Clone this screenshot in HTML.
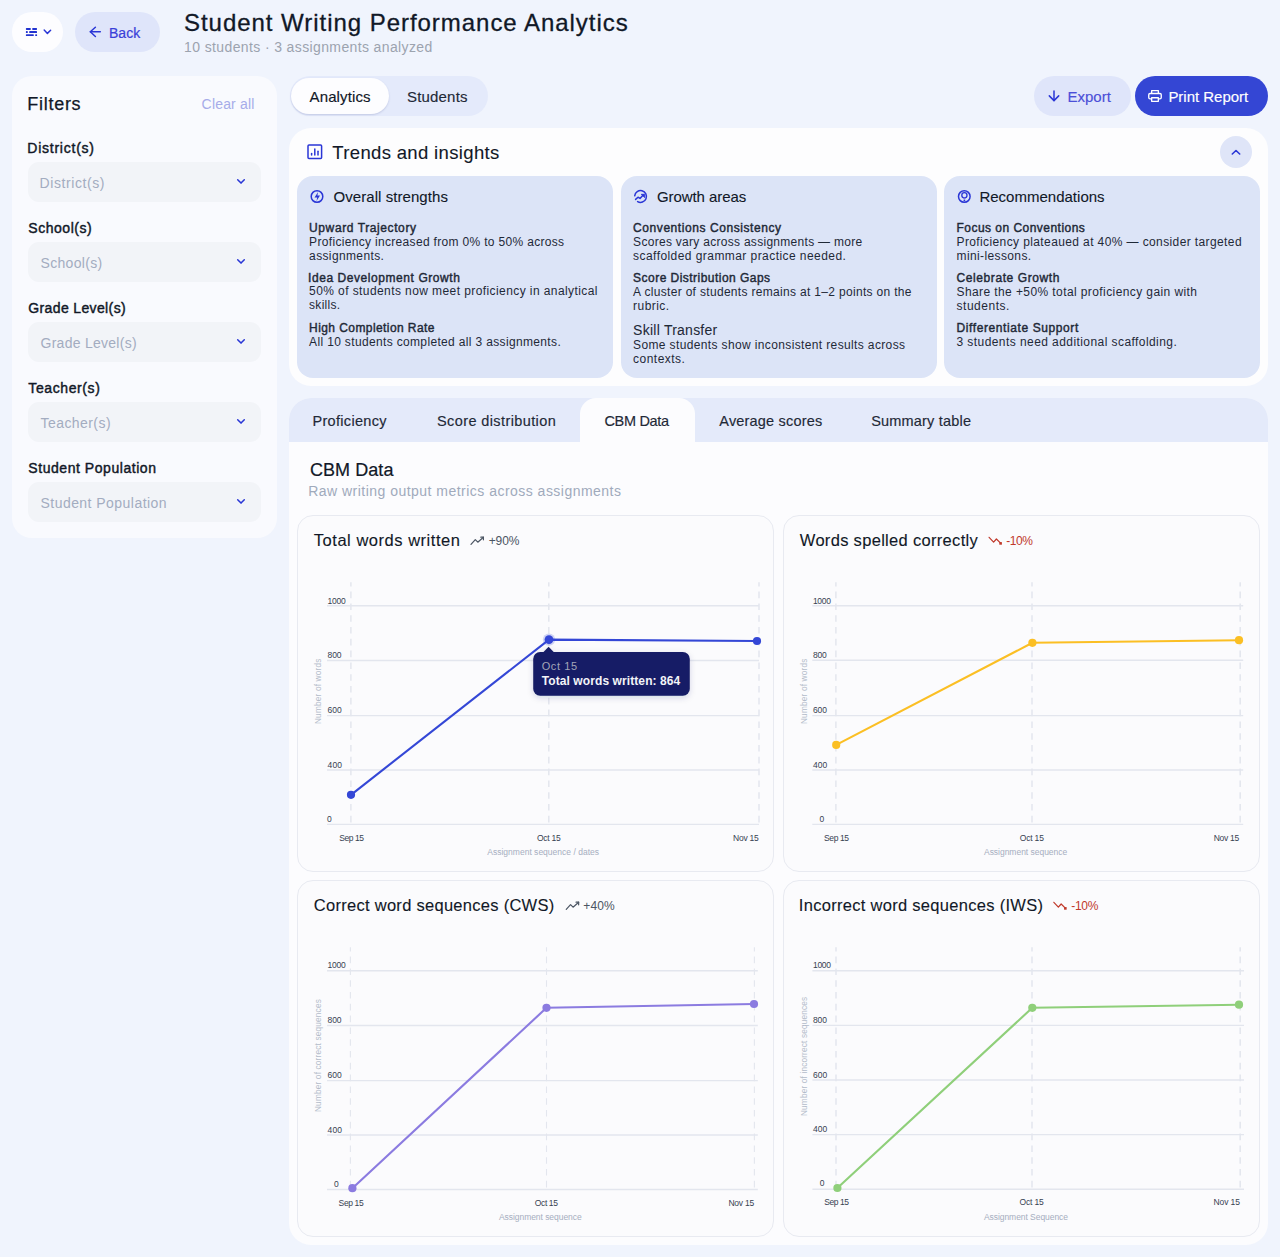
<!DOCTYPE html><html><head><meta charset="utf-8"><title>Student Writing Performance Analytics</title><style>
html,body{margin:0;padding:0;}
body{width:1280px;height:1257px;overflow:hidden;background:#f0f4fd;position:relative;font-family:"Liberation Sans",sans-serif;}
.t{position:absolute;white-space:nowrap;line-height:1;}
.b{position:absolute;box-sizing:border-box;}
svg{position:absolute;left:0;top:0;overflow:visible;}
</style></head><body>
<div class="b" style="left:12px;top:12px;width:51px;height:40px;background:#fdfdff;border-radius:20px;"></div>
<svg width="80" height="60"><g fill="#2233d0">
<rect x="25.9" y="28" width="4.9" height="1.9" rx="0.6"/><rect x="32.2" y="28" width="4.8" height="1.9" rx="0.6"/>
<rect x="25.9" y="31.1" width="1.9" height="1.9" rx="0.6"/><rect x="29.2" y="31.1" width="7.8" height="1.9" rx="0.6"/>
<rect x="25.9" y="34.2" width="7.9" height="1.9" rx="0.6"/><rect x="35.2" y="34.2" width="1.9" height="1.9" rx="0.6"/>
</g><polyline points="44.2,30.1 47.4,33.4 50.6,30.2" fill="none" stroke="#2a36d6" stroke-width="1.5" stroke-linecap="round" stroke-linejoin="round"/></svg>
<div class="b" style="left:75px;top:12px;width:85px;height:40px;background:#dfe5fa;border-radius:20px;"></div>
<svg width="160" height="60"><g fill="none" stroke="#2a36d6" stroke-width="1.5" stroke-linecap="round" stroke-linejoin="round">
<polyline points="95.4,27.3 90.3,31.8 95.4,36.5"/><line x1="90.4" y1="31.8" x2="100.3" y2="31.8"/></g></svg>
<div class="t" style="left:109.00px;top:25.65px;font-size:14px;color:#3a40d8;letter-spacing:0.025px;-webkit-text-stroke:0.2px #3a40d8;">Back</div>
<div class="t" style="left:184.00px;top:11.48px;font-size:24px;color:#111827;letter-spacing:0.961px;-webkit-text-stroke:0.3px #111827;">Student Writing Performance Analytics</div>
<div class="t" style="left:184.10px;top:39.95px;font-size:14px;color:#9ca3af;letter-spacing:0.376px;">10 students · 3 assignments analyzed</div>
<div class="b" style="left:12px;top:76px;width:265px;height:462px;background:#f9fafe;border-radius:20px;"></div>
<div class="t" style="left:27.30px;top:95.06px;font-size:18px;color:#111827;letter-spacing:0.717px;-webkit-text-stroke:0.25px #111827;">Filters</div>
<div class="t" style="left:201.60px;top:96.55px;font-size:14px;color:#a6ace9;letter-spacing:0.182px;">Clear all</div>
<div class="t" style="left:27.30px;top:140.85px;font-size:14px;color:#111827;letter-spacing:0.757px;-webkit-text-stroke:0.42px #111827;">District(s)</div>
<div class="b" style="left:28px;top:162px;width:233px;height:40px;background:#f2f4f8;border-radius:11px;"></div>
<div class="t" style="left:39.50px;top:175.65px;font-size:14px;color:#a3acc0;letter-spacing:0.587px;">District(s)</div>
<svg width="280" height="600"><polyline points="237.7,179.7 241,183.1 244.3,179.7" fill="none" stroke="#2a36d6" stroke-width="1.5" stroke-linecap="round" stroke-linejoin="round"/></svg>
<div class="t" style="left:28.30px;top:220.85px;font-size:14px;color:#111827;letter-spacing:0.541px;-webkit-text-stroke:0.42px #111827;">School(s)</div>
<div class="b" style="left:28px;top:242px;width:233px;height:40px;background:#f2f4f8;border-radius:11px;"></div>
<div class="t" style="left:40.50px;top:255.65px;font-size:14px;color:#a3acc0;letter-spacing:0.316px;">School(s)</div>
<svg width="280" height="600"><polyline points="237.7,259.7 241,263.1 244.3,259.7" fill="none" stroke="#2a36d6" stroke-width="1.5" stroke-linecap="round" stroke-linejoin="round"/></svg>
<div class="t" style="left:28.30px;top:300.85px;font-size:14px;color:#111827;letter-spacing:0.367px;-webkit-text-stroke:0.42px #111827;">Grade Level(s)</div>
<div class="b" style="left:28px;top:322px;width:233px;height:40px;background:#f2f4f8;border-radius:11px;"></div>
<div class="t" style="left:40.50px;top:335.65px;font-size:14px;color:#a3acc0;letter-spacing:0.267px;">Grade Level(s)</div>
<svg width="280" height="600"><polyline points="237.7,339.7 241,343.1 244.3,339.7" fill="none" stroke="#2a36d6" stroke-width="1.5" stroke-linecap="round" stroke-linejoin="round"/></svg>
<div class="t" style="left:28.30px;top:380.85px;font-size:14px;color:#111827;letter-spacing:0.603px;-webkit-text-stroke:0.42px #111827;">Teacher(s)</div>
<div class="b" style="left:28px;top:402px;width:233px;height:40px;background:#f2f4f8;border-radius:11px;"></div>
<div class="t" style="left:40.50px;top:415.65px;font-size:14px;color:#a3acc0;letter-spacing:0.437px;">Teacher(s)</div>
<svg width="280" height="600"><polyline points="237.7,419.7 241,423.1 244.3,419.7" fill="none" stroke="#2a36d6" stroke-width="1.5" stroke-linecap="round" stroke-linejoin="round"/></svg>
<div class="t" style="left:28.30px;top:460.85px;font-size:14px;color:#111827;letter-spacing:0.551px;-webkit-text-stroke:0.42px #111827;">Student Population</div>
<div class="b" style="left:28px;top:482px;width:233px;height:40px;background:#f2f4f8;border-radius:11px;"></div>
<div class="t" style="left:40.50px;top:495.65px;font-size:14px;color:#a3acc0;letter-spacing:0.457px;">Student Population</div>
<svg width="280" height="600"><polyline points="237.7,499.7 241,503.1 244.3,499.7" fill="none" stroke="#2a36d6" stroke-width="1.5" stroke-linecap="round" stroke-linejoin="round"/></svg>
<div class="b" style="left:290px;top:76px;width:198px;height:40px;background:#e4eafb;border-radius:20px;"></div>
<div class="b" style="left:291px;top:78px;width:98px;height:36px;background:#fdfdff;border-radius:18px;box-shadow:0 1px 2px rgba(60,70,140,0.20);"></div>
<div class="t" style="left:309.60px;top:89.10px;font-size:15px;color:#111827;letter-spacing:0.110px;-webkit-text-stroke:0.15px #111827;">Analytics</div>
<div class="t" style="left:407.00px;top:89.10px;font-size:15px;color:#1f2937;letter-spacing:0.184px;-webkit-text-stroke:0.15px #1f2937;">Students</div>
<div class="b" style="left:1034px;top:76px;width:97px;height:40px;background:#dfe5fa;border-radius:20px;"></div>
<svg width="1280" height="130"><g fill="none" stroke="#2a36d6" stroke-width="1.5" stroke-linecap="round" stroke-linejoin="round">
<line x1="1054" y1="90.9" x2="1054" y2="100.6"/><polyline points="1049.3,95.9 1054,100.6 1058.7,95.9"/></g></svg>
<div class="t" style="left:1067.40px;top:89.20px;font-size:15px;color:#4b4fd8;letter-spacing:0.023px;-webkit-text-stroke:0.15px #4b4fd8;">Export</div>
<div class="b" style="left:1135px;top:76px;width:133px;height:40px;background:#3446d4;border-radius:20px;"></div>
<svg width="1280" height="130"><g fill="none" stroke="#ffffff" stroke-width="1.35" stroke-linejoin="round">
<path d="M1151.65 93.5 V90.65 H1158.35 V93.5"/><rect x="1148.75" y="93.5" width="12.5" height="5.4" rx="1.3"/><rect x="1151.65" y="97.75" width="6.7" height="3.6" fill="#3446d4"/></g></svg>
<div class="t" style="left:1168.40px;top:89.20px;font-size:15px;color:#ffffff;letter-spacing:-0.024px;-webkit-text-stroke:0.15px #ffffff;">Print Report</div>
<div class="b" style="left:289px;top:128px;width:979px;height:258px;background:#fdfdfe;border-radius:22px;"></div>
<svg width="1280" height="400"><g fill="none" stroke="#2a36d6" stroke-width="1.5" stroke-linecap="round">
<rect x="308" y="145" width="13.6" height="13.6" rx="1"/><line x1="311.6" y1="155" x2="311.6" y2="153.6"/><line x1="314.8" y1="155" x2="314.8" y2="149"/><line x1="318" y1="155" x2="318" y2="151.2"/></g></svg>
<div class="t" style="left:332.30px;top:143.74px;font-size:18.5px;color:#111827;letter-spacing:0.344px;-webkit-text-stroke:0.1px #111827;">Trends and insights</div>
<div class="b" style="left:1220px;top:136px;width:32px;height:32px;background:#dfe5f8;border-radius:16px;"></div>
<svg width="1280" height="400"><polyline points="1232.3,154 1236,150.5 1239.7,154" fill="none" stroke="#2a36d6" stroke-width="1.6" stroke-linecap="round" stroke-linejoin="round"/></svg>
<div class="b" style="left:297px;top:176px;width:315.8px;height:202px;background:#dce4f7;border-radius:16px;"></div>
<svg width="1280" height="400"><circle cx="317" cy="196.5" r="5.8" fill="none" stroke="#2a36d6" stroke-width="1.5"/><path d="M318.1 191.9 L314.5 197.4 H317.2 L316.5 201 L320 195.5 H317.4 Z" fill="#2a36d6"/></svg>
<div class="t" style="left:333.50px;top:189.20px;font-size:15px;color:#111827;letter-spacing:0.064px;-webkit-text-stroke:0.1px #111827;">Overall strengths</div>
<div class="t" style="left:309.10px;top:221.74px;font-size:12px;color:#1f2937;letter-spacing:0.595px;-webkit-text-stroke:0.42px #1f2937;">Upward Trajectory</div>
<div class="t" style="left:309.10px;top:235.54px;font-size:12px;color:#1f2937;letter-spacing:0.323px;">Proficiency increased from 0% to 50% across</div>
<div class="t" style="left:309.10px;top:249.54px;font-size:12px;color:#1f2937;letter-spacing:0.367px;">assignments.</div>
<div class="t" style="left:308.10px;top:271.54px;font-size:12px;color:#1f2937;letter-spacing:0.562px;-webkit-text-stroke:0.42px #1f2937;">Idea Development Growth</div>
<div class="t" style="left:309.10px;top:285.34px;font-size:12px;color:#1f2937;letter-spacing:0.413px;">50% of students now meet proficiency in analytical</div>
<div class="t" style="left:309.10px;top:299.44px;font-size:12px;color:#1f2937;letter-spacing:0.267px;">skills.</div>
<div class="t" style="left:309.10px;top:321.64px;font-size:12px;color:#1f2937;letter-spacing:0.420px;-webkit-text-stroke:0.42px #1f2937;">High Completion Rate</div>
<div class="t" style="left:309.10px;top:335.54px;font-size:12px;color:#1f2937;letter-spacing:0.345px;">All 10 students completed all 3 assignments.</div>
<div class="b" style="left:621px;top:176px;width:315.8px;height:202px;background:#dce4f7;border-radius:16px;"></div>
<svg width="1280" height="400"><path d="M634.7 195.8 A5.9 5.9 0 1 1 637.6 201.6" fill="none" stroke="#2a36d6" stroke-width="1.5" stroke-linecap="round"/><polyline points="635.6,199.4 638,197.2 640,198.4 643.2,195" fill="none" stroke="#2a36d6" stroke-width="1.5" stroke-linecap="round" stroke-linejoin="round"/><path d="M641.2 194.3 L644.6 194.3 L644.6 197.6 Z" fill="#2a36d6" stroke="#2a36d6" stroke-width="0.8" stroke-linejoin="round"/></svg>
<div class="t" style="left:657.00px;top:189.20px;font-size:15px;color:#111827;letter-spacing:-0.076px;-webkit-text-stroke:0.1px #111827;">Growth areas</div>
<div class="t" style="left:633.10px;top:221.74px;font-size:12px;color:#1f2937;letter-spacing:0.568px;-webkit-text-stroke:0.42px #1f2937;">Conventions Consistency</div>
<div class="t" style="left:633.10px;top:235.54px;font-size:12px;color:#1f2937;letter-spacing:0.287px;">Scores vary across assignments — more</div>
<div class="t" style="left:633.10px;top:249.54px;font-size:12px;color:#1f2937;letter-spacing:0.437px;">scaffolded grammar practice needed.</div>
<div class="t" style="left:633.10px;top:271.64px;font-size:12px;color:#1f2937;letter-spacing:0.467px;-webkit-text-stroke:0.42px #1f2937;">Score Distribution Gaps</div>
<div class="t" style="left:633.10px;top:285.54px;font-size:12px;color:#1f2937;letter-spacing:0.318px;">A cluster of students remains at 1–2 points on the</div>
<div class="t" style="left:633.10px;top:299.54px;font-size:12px;color:#1f2937;letter-spacing:0.432px;">rubric.</div>
<div class="t" style="left:633.10px;top:323.35px;font-size:14px;color:#1f2937;letter-spacing:0.246px;-webkit-text-stroke:0.05px #1f2937;">Skill Transfer</div>
<div class="t" style="left:633.10px;top:338.54px;font-size:12px;color:#1f2937;letter-spacing:0.366px;">Some students show inconsistent results across</div>
<div class="t" style="left:633.10px;top:352.54px;font-size:12px;color:#1f2937;letter-spacing:0.476px;">contexts.</div>
<div class="b" style="left:944px;top:176px;width:316px;height:202px;background:#dce4f7;border-radius:16px;"></div>
<svg width="1280" height="400"><circle cx="964.3" cy="196.5" r="5.8" fill="none" stroke="#2a36d6" stroke-width="1.5"/><circle cx="964.4" cy="195.2" r="2.6" fill="none" stroke="#2a36d6" stroke-width="1.3"/><rect x="963.3" y="197.6" width="2.2" height="1.6" fill="#7b6fe0"/><circle cx="964.4" cy="200.4" r="0.9" fill="#2a36d6"/></svg>
<div class="t" style="left:979.40px;top:189.20px;font-size:15px;color:#111827;letter-spacing:0.010px;-webkit-text-stroke:0.1px #111827;">Recommendations</div>
<div class="t" style="left:956.50px;top:221.74px;font-size:12px;color:#1f2937;letter-spacing:0.468px;-webkit-text-stroke:0.42px #1f2937;">Focus on Conventions</div>
<div class="t" style="left:956.50px;top:235.54px;font-size:12px;color:#1f2937;letter-spacing:0.388px;">Proficiency plateaued at 40% — consider targeted</div>
<div class="t" style="left:956.50px;top:249.54px;font-size:12px;color:#1f2937;letter-spacing:0.385px;">mini-lessons.</div>
<div class="t" style="left:956.50px;top:271.64px;font-size:12px;color:#1f2937;letter-spacing:0.589px;-webkit-text-stroke:0.42px #1f2937;">Celebrate Growth</div>
<div class="t" style="left:956.50px;top:285.54px;font-size:12px;color:#1f2937;letter-spacing:0.407px;">Share the +50% total proficiency gain with</div>
<div class="t" style="left:956.50px;top:299.54px;font-size:12px;color:#1f2937;letter-spacing:0.530px;">students.</div>
<div class="t" style="left:956.50px;top:321.64px;font-size:12px;color:#1f2937;letter-spacing:0.594px;-webkit-text-stroke:0.42px #1f2937;">Differentiate Support</div>
<div class="t" style="left:956.50px;top:335.54px;font-size:12px;color:#1f2937;letter-spacing:0.429px;">3 students need additional scaffolding.</div>
<div class="b" style="left:289px;top:398px;width:979px;height:847px;background:#fcfcfe;border-radius:22px;"></div>
<div class="b" style="left:289px;top:398px;width:979px;height:44px;background:#e4eafa;border-radius:22px 22px 0 0;"></div>
<div class="b" style="left:580px;top:398px;width:115px;height:44px;background:#fcfcfe;border-radius:16px 16px 0 0;"></div>
<div class="t" style="left:312.40px;top:413.73px;font-size:14.5px;color:#1f2937;letter-spacing:0.324px;-webkit-text-stroke:0.15px #1f2937;">Proficiency</div>
<div class="t" style="left:437.00px;top:413.73px;font-size:14.5px;color:#1f2937;letter-spacing:0.396px;-webkit-text-stroke:0.15px #1f2937;">Score distribution</div>
<div class="t" style="left:604.40px;top:413.73px;font-size:14.5px;color:#1f2937;letter-spacing:-0.316px;-webkit-text-stroke:0.15px #1f2937;">CBM Data</div>
<div class="t" style="left:719.30px;top:413.73px;font-size:14.5px;color:#1f2937;letter-spacing:0.190px;-webkit-text-stroke:0.15px #1f2937;">Average scores</div>
<div class="t" style="left:871.20px;top:413.73px;font-size:14.5px;color:#1f2937;letter-spacing:0.188px;-webkit-text-stroke:0.15px #1f2937;">Summary table</div>
<div class="t" style="left:310.00px;top:460.86px;font-size:18px;color:#111827;letter-spacing:0.056px;-webkit-text-stroke:0.2px #111827;">CBM Data</div>
<div class="t" style="left:308.20px;top:483.65px;font-size:14px;color:#a0aabc;letter-spacing:0.478px;">Raw writing output metrics across assignments</div>
<div class="b" style="left:297px;top:515px;width:477px;height:357px;background:#fbfbfd;border-radius:16px;border:1px solid #e8eaf1;"></div>
<div class="t" style="left:313.80px;top:532.23px;font-size:16.5px;color:#111827;letter-spacing:0.525px;-webkit-text-stroke:0.1px #111827;">Total words written</div>
<svg width="1280" height="1257"><g fill="none" stroke="#4b5563" stroke-width="1.2" stroke-linecap="round" stroke-linejoin="round"><polyline points="471,544.4000000000001 475.3,539.7 477.8,542.2 483.4,537.2"/><polyline points="480.8,537.2 483.4,537.2 483.4,539.8000000000001"/></g><line x1="327" y1="605.8" x2="759" y2="605.8" stroke="#e3e6ee" stroke-width="1.4"/><line x1="327" y1="660.5" x2="759" y2="660.5" stroke="#e3e6ee" stroke-width="1.4"/><line x1="327" y1="715.6" x2="759" y2="715.6" stroke="#e3e6ee" stroke-width="1.4"/><line x1="327" y1="770" x2="759" y2="770" stroke="#e3e6ee" stroke-width="1.4"/><line x1="327" y1="824.4" x2="759" y2="824.4" stroke="#e3e6ee" stroke-width="1.4"/><line x1="350.9" y1="582.2" x2="350.9" y2="824.4" stroke="#e3e6ee" stroke-width="1.5" stroke-dasharray="6.6 5.2" stroke-dashoffset="2.4"/><line x1="548.8" y1="582.2" x2="548.8" y2="824.4" stroke="#e3e6ee" stroke-width="1.5" stroke-dasharray="6.6 5.2" stroke-dashoffset="2.4"/><line x1="759" y1="582.2" x2="759" y2="824.4" stroke="#e3e6ee" stroke-width="1.5" stroke-dasharray="6.6 5.2" stroke-dashoffset="2.4"/><path d="M351 794.8 L549 639.6 L757 641" fill="none" stroke="#3447d6" stroke-width="2.1" stroke-linejoin="round"/><circle cx="351" cy="794.8" r="4.1" fill="#3447d6"/><circle cx="549" cy="639.6" r="6.2" fill="#3447d6" fill-opacity="0.22"/><circle cx="549" cy="639.6" r="4.4" fill="#3447d6"/><circle cx="757" cy="641" r="4.1" fill="#3447d6"/></svg>
<div class="t" style="left:488.75px;top:534.74px;font-size:12px;color:#4b5563;letter-spacing:-0.135px;">+90%</div>
<div class="t" style="left:327.60px;top:596.50px;font-size:8.5px;color:#374151;letter-spacing:-0.294px;">1000</div>
<div class="t" style="left:327.60px;top:651.20px;font-size:8.5px;color:#374151;letter-spacing:-0.127px;">800</div>
<div class="t" style="left:327.60px;top:706.30px;font-size:8.5px;color:#374151;letter-spacing:-0.027px;">600</div>
<div class="t" style="left:327.60px;top:760.70px;font-size:8.5px;color:#374151;letter-spacing:0.073px;">400</div>
<div class="t" style="left:327.10px;top:814.60px;font-size:8.5px;color:#374151;">0</div>
<div class="t" style="left:339.20px;top:833.60px;font-size:8.5px;color:#374151;letter-spacing:-0.443px;">Sep 15</div>
<div class="t" style="left:536.90px;top:833.60px;font-size:8.5px;color:#374151;letter-spacing:-0.242px;">Oct 15</div>
<div class="t" style="left:733.00px;top:833.60px;font-size:8.5px;color:#374151;letter-spacing:-0.241px;">Nov 15</div>
<div class="t" style="left:487.25px;top:848.20px;font-size:8.5px;color:#a6aec0;letter-spacing:0.009px;">Assignment sequence / dates</div>
<div class="t" style="left:320.90px;top:716.87px;font-size:8.3px;color:#b3bbca;letter-spacing:0.156px;transform-origin:0 7.026px;transform:rotate(-90deg);">Number of words</div>
<div class="b" style="left:783px;top:515px;width:477px;height:357px;background:#fbfbfd;border-radius:16px;border:1px solid #e8eaf1;"></div>
<div class="t" style="left:799.80px;top:532.23px;font-size:16.5px;color:#111827;letter-spacing:0.308px;-webkit-text-stroke:0.1px #111827;">Words spelled correctly</div>
<svg width="1280" height="1257"><g fill="none" stroke="#c0392b" stroke-width="1.2" stroke-linecap="round" stroke-linejoin="round"><polyline points="989.1,537.3000000000001 993.6,542.2 996.4,539.0 1000.6,543.1"/></g><rect x="999.3" y="542.1" width="2.6" height="2.6" fill="#c0392b"/><line x1="812.3" y1="605.8" x2="1243.2" y2="605.8" stroke="#e3e6ee" stroke-width="1.4"/><line x1="812.3" y1="660.3" x2="1243.2" y2="660.3" stroke="#e3e6ee" stroke-width="1.4"/><line x1="812.3" y1="715.6" x2="1243.2" y2="715.6" stroke="#e3e6ee" stroke-width="1.4"/><line x1="812.3" y1="770" x2="1243.2" y2="770" stroke="#e3e6ee" stroke-width="1.4"/><line x1="812.3" y1="824.4" x2="1243.2" y2="824.4" stroke="#e3e6ee" stroke-width="1.4"/><line x1="835.9" y1="582.2" x2="835.9" y2="824.4" stroke="#e3e6ee" stroke-width="1.5" stroke-dasharray="6.6 5.2" stroke-dashoffset="2.4"/><line x1="1032" y1="582.2" x2="1032" y2="824.4" stroke="#e3e6ee" stroke-width="1.5" stroke-dasharray="6.6 5.2" stroke-dashoffset="2.4"/><line x1="1240.2" y1="582.2" x2="1240.2" y2="824.4" stroke="#e3e6ee" stroke-width="1.5" stroke-dasharray="6.6 5.2" stroke-dashoffset="2.4"/><path d="M836.2 744.9 L1032.4 642.8 L1239 640.2" fill="none" stroke="#fbbf24" stroke-width="2.1" stroke-linejoin="round"/><circle cx="836.2" cy="744.9" r="4.1" fill="#fbbf24"/><circle cx="1032.4" cy="642.8" r="4.1" fill="#fbbf24"/><circle cx="1239" cy="640.2" r="4.1" fill="#fbbf24"/></svg>
<div class="t" style="left:1006.30px;top:534.74px;font-size:12px;color:#c0392b;letter-spacing:-0.448px;">-10%</div>
<div class="t" style="left:812.90px;top:596.50px;font-size:8.5px;color:#374151;letter-spacing:-0.294px;">1000</div>
<div class="t" style="left:812.90px;top:651.00px;font-size:8.5px;color:#374151;letter-spacing:-0.127px;">800</div>
<div class="t" style="left:812.90px;top:706.30px;font-size:8.5px;color:#374151;letter-spacing:-0.027px;">600</div>
<div class="t" style="left:812.90px;top:760.70px;font-size:8.5px;color:#374151;letter-spacing:0.073px;">400</div>
<div class="t" style="left:819.50px;top:814.60px;font-size:8.5px;color:#374151;">0</div>
<div class="t" style="left:824.00px;top:833.60px;font-size:8.5px;color:#374151;letter-spacing:-0.383px;">Sep 15</div>
<div class="t" style="left:1019.70px;top:833.60px;font-size:8.5px;color:#374151;letter-spacing:-0.162px;">Oct 15</div>
<div class="t" style="left:1213.80px;top:833.60px;font-size:8.5px;color:#374151;letter-spacing:-0.321px;">Nov 15</div>
<div class="t" style="left:984.00px;top:848.20px;font-size:8.5px;color:#a6aec0;letter-spacing:-0.023px;">Assignment sequence</div>
<div class="t" style="left:806.90px;top:716.87px;font-size:8.3px;color:#b3bbca;letter-spacing:0.156px;transform-origin:0 7.026px;transform:rotate(-90deg);">Number of words</div>
<div class="b" style="left:297px;top:880px;width:477px;height:357px;background:#fbfbfd;border-radius:16px;border:1px solid #e8eaf1;"></div>
<div class="t" style="left:313.80px;top:897.23px;font-size:16.5px;color:#111827;letter-spacing:0.279px;-webkit-text-stroke:0.1px #111827;">Correct word sequences (CWS)</div>
<svg width="1280" height="1257"><g fill="none" stroke="#4b5563" stroke-width="1.2" stroke-linecap="round" stroke-linejoin="round"><polyline points="566.25,909.4000000000001 570.55,904.7 573.05,907.2 578.65,902.2"/><polyline points="576.05,902.2 578.65,902.2 578.65,904.8000000000001"/></g><line x1="327" y1="970.7" x2="757.8" y2="970.7" stroke="#e3e6ee" stroke-width="1.4"/><line x1="327" y1="1025.5" x2="757.8" y2="1025.5" stroke="#e3e6ee" stroke-width="1.4"/><line x1="327" y1="1080.6" x2="757.8" y2="1080.6" stroke="#e3e6ee" stroke-width="1.4"/><line x1="327" y1="1135" x2="757.8" y2="1135" stroke="#e3e6ee" stroke-width="1.4"/><line x1="327" y1="1189.5" x2="757.8" y2="1189.5" stroke="#e3e6ee" stroke-width="1.4"/><line x1="350.4" y1="947.2" x2="350.4" y2="1189.5" stroke="#e3e6ee" stroke-width="1.1" stroke-dasharray="6.6 5.2" stroke-dashoffset="2.4"/><line x1="546.5" y1="947.2" x2="546.5" y2="1189.5" stroke="#e3e6ee" stroke-width="1.1" stroke-dasharray="6.6 5.2" stroke-dashoffset="2.4"/><line x1="754.4" y1="947.2" x2="754.4" y2="1189.5" stroke="#e3e6ee" stroke-width="1.1" stroke-dasharray="6.6 5.2" stroke-dashoffset="2.4"/><path d="M352.4 1188.2 L546.5 1007.8 L754 1004" fill="none" stroke="#8b7be0" stroke-width="2.1" stroke-linejoin="round"/><circle cx="352.4" cy="1188.2" r="4.1" fill="#8b7be0"/><circle cx="546.5" cy="1007.8" r="4.1" fill="#8b7be0"/><circle cx="754" cy="1004" r="4.1" fill="#8b7be0"/></svg>
<div class="t" style="left:583.25px;top:899.74px;font-size:12px;color:#4b5563;letter-spacing:0.132px;">+40%</div>
<div class="t" style="left:327.60px;top:961.40px;font-size:8.5px;color:#374151;letter-spacing:-0.294px;">1000</div>
<div class="t" style="left:327.60px;top:1016.20px;font-size:8.5px;color:#374151;letter-spacing:-0.127px;">800</div>
<div class="t" style="left:327.60px;top:1071.30px;font-size:8.5px;color:#374151;letter-spacing:-0.027px;">600</div>
<div class="t" style="left:327.60px;top:1125.70px;font-size:8.5px;color:#374151;letter-spacing:0.073px;">400</div>
<div class="t" style="left:334.10px;top:1179.70px;font-size:8.5px;color:#374151;">0</div>
<div class="t" style="left:338.60px;top:1198.70px;font-size:8.5px;color:#374151;letter-spacing:-0.383px;">Sep 15</div>
<div class="t" style="left:534.80px;top:1198.70px;font-size:8.5px;color:#374151;letter-spacing:-0.382px;">Oct 15</div>
<div class="t" style="left:728.40px;top:1198.70px;font-size:8.5px;color:#374151;letter-spacing:-0.241px;">Nov 15</div>
<div class="t" style="left:498.90px;top:1213.30px;font-size:8.5px;color:#a6aec0;letter-spacing:-0.045px;">Assignment sequence</div>
<div class="t" style="left:321.40px;top:1105.37px;font-size:8.3px;color:#b3bbca;letter-spacing:0.154px;transform-origin:0 7.026px;transform:rotate(-90deg);">Number of correct sequences</div>
<div class="b" style="left:783px;top:880px;width:477px;height:357px;background:#fbfbfd;border-radius:16px;border:1px solid #e8eaf1;"></div>
<div class="t" style="left:798.80px;top:897.23px;font-size:16.5px;color:#111827;letter-spacing:0.294px;-webkit-text-stroke:0.1px #111827;">Incorrect word sequences (IWS)</div>
<svg width="1280" height="1257"><g fill="none" stroke="#c0392b" stroke-width="1.2" stroke-linecap="round" stroke-linejoin="round"><polyline points="1053.85,902.3000000000001 1058.35,907.2 1061.15,904.0 1065.35,908.1"/></g><rect x="1064.05" y="907.1" width="2.6" height="2.6" fill="#c0392b"/><line x1="812.4" y1="970.7" x2="1244" y2="970.7" stroke="#e3e6ee" stroke-width="1.4"/><line x1="812.4" y1="1025.4" x2="1244" y2="1025.4" stroke="#e3e6ee" stroke-width="1.4"/><line x1="812.4" y1="1080" x2="1244" y2="1080" stroke="#e3e6ee" stroke-width="1.4"/><line x1="812.4" y1="1134.6" x2="1244" y2="1134.6" stroke="#e3e6ee" stroke-width="1.4"/><line x1="812.4" y1="1189.2" x2="1244" y2="1189.2" stroke="#e3e6ee" stroke-width="1.4"/><line x1="836" y1="947.2" x2="836" y2="1189.2" stroke="#e3e6ee" stroke-width="1.5" stroke-dasharray="6.6 5.2" stroke-dashoffset="2.4"/><line x1="1032" y1="947.2" x2="1032" y2="1189.2" stroke="#e3e6ee" stroke-width="1.5" stroke-dasharray="6.6 5.2" stroke-dashoffset="2.4"/><line x1="1240.2" y1="947.2" x2="1240.2" y2="1189.2" stroke="#e3e6ee" stroke-width="1.5" stroke-dasharray="6.6 5.2" stroke-dashoffset="2.4"/><path d="M837.4 1188 L1032.3 1007.8 L1239 1004.7" fill="none" stroke="#8fcf7a" stroke-width="2.1" stroke-linejoin="round"/><circle cx="837.4" cy="1188" r="4.1" fill="#8fcf7a"/><circle cx="1032.3" cy="1007.8" r="4.1" fill="#8fcf7a"/><circle cx="1239" cy="1004.7" r="4.1" fill="#8fcf7a"/></svg>
<div class="t" style="left:1071.25px;top:899.74px;font-size:12px;color:#c0392b;letter-spacing:-0.281px;">-10%</div>
<div class="t" style="left:813.00px;top:961.40px;font-size:8.5px;color:#374151;letter-spacing:-0.294px;">1000</div>
<div class="t" style="left:813.00px;top:1016.10px;font-size:8.5px;color:#374151;letter-spacing:-0.127px;">800</div>
<div class="t" style="left:813.00px;top:1070.70px;font-size:8.5px;color:#374151;letter-spacing:-0.027px;">600</div>
<div class="t" style="left:813.00px;top:1125.30px;font-size:8.5px;color:#374151;letter-spacing:0.073px;">400</div>
<div class="t" style="left:819.80px;top:1179.40px;font-size:8.5px;color:#374151;">0</div>
<div class="t" style="left:824.20px;top:1198.40px;font-size:8.5px;color:#374151;letter-spacing:-0.443px;">Sep 15</div>
<div class="t" style="left:1019.50px;top:1198.40px;font-size:8.5px;color:#374151;letter-spacing:-0.142px;">Oct 15</div>
<div class="t" style="left:1213.60px;top:1198.40px;font-size:8.5px;color:#374151;letter-spacing:-0.121px;">Nov 15</div>
<div class="t" style="left:983.90px;top:1213.00px;font-size:8.5px;color:#a6aec0;letter-spacing:-0.051px;">Assignment Sequence</div>
<div class="t" style="left:807.20px;top:1108.77px;font-size:8.3px;color:#b3bbca;letter-spacing:0.141px;transform-origin:0 7.026px;transform:rotate(-90deg);">Number of incorrect sequences</div>
<svg width="1280" height="1257"><defs><filter id="sh" x="-20%" y="-30%" width="140%" height="170%"><feDropShadow dx="0" dy="2" stdDeviation="3" flood-color="#1a2060" flood-opacity="0.16"/></filter></defs>
<g filter="url(#sh)"><rect x="533.2" y="652" width="156.6" height="43.8" rx="7" fill="#161c66"/><path d="M543 652.5 L548.6 646.8 L554.2 652.5 Z" fill="#161c66"/></g></svg>
<div class="t" style="left:541.70px;top:661.19px;font-size:11px;color:#a3a5b8;letter-spacing:0.603px;">Oct 15</div>
<div class="t" style="left:541.70px;top:674.74px;font-size:12px;color:#f3f4f8;font-weight:700;letter-spacing:0.092px;">Total words written: 864</div>
</body></html>
